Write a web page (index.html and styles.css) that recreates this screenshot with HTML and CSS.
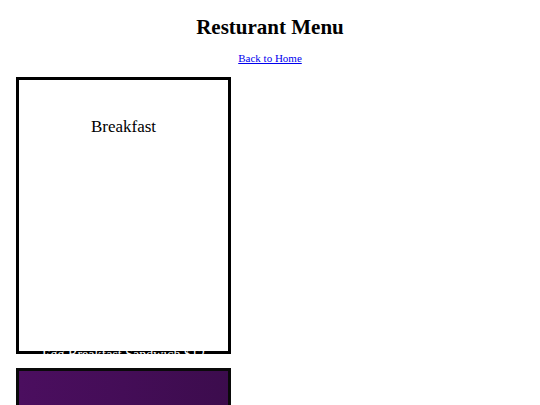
FILE: index.html
```html
<!DOCTYPE html>
<html>
<head>
<meta charset="utf-8">
<title>Resturant Menu</title>
<link rel="stylesheet" href="styles.css">
</head>
<body>
<header class="header">
  <h1 class="title">Resturant Menu</h1>
  <a class="home-link" href="#">Back to Home</a>
</header>
<main class="menu">
  <section class="card">
    <h2 class="card-title">Breakfast</h2>
    <p class="caption">Egg Breakfast Sandwich $12</p>
  </section>
  <section class="card card-dark"></section>
</main>
</body>
</html>
```
FILE: styles.css
```css
html, body {
  margin: 0;
  padding: 0;
  background: #ffffff;
}
body {
  font-family: "Liberation Serif", "Times New Roman", serif;
  color: #000;
}
.header {
  display: flex;
  flex-direction: column;
  align-items: center;
  padding-top: 15px;
}
.title {
  margin: 0;
  font-size: 21px;
  line-height: 24px;
  font-weight: bold;
}
.home-link {
  margin-top: 13px;
  font-size: 11px;
  line-height: 13px;
  color: #0000ee;
  text-decoration: underline;
}
.menu {
  display: flex;
  flex-direction: column;
  gap: 14px;
  padding: 12px 0 0 16px;
}
.card {
  position: relative;
  box-sizing: border-box;
  width: 215px;
  height: 277px;
  border: 3px solid #000;
  padding-top: 37px;
  background: #fff;
}
.card-title {
  margin: 0;
  text-align: center;
  font-size: 17px;
  line-height: 20px;
  font-weight: normal;
}
.caption {
  position: absolute;
  left: 0;
  right: 0;
  bottom: -12px;
  margin: 0;
  text-align: center;
  color: #fff;
  font-size: 14px;
  line-height: 16px;
}
.card-dark {
  border: 3px solid #0a0a0a;
  background: linear-gradient(90deg, #4b0e5f 0%, #440d57 50%, #3c0c4d 100%);
}
```
